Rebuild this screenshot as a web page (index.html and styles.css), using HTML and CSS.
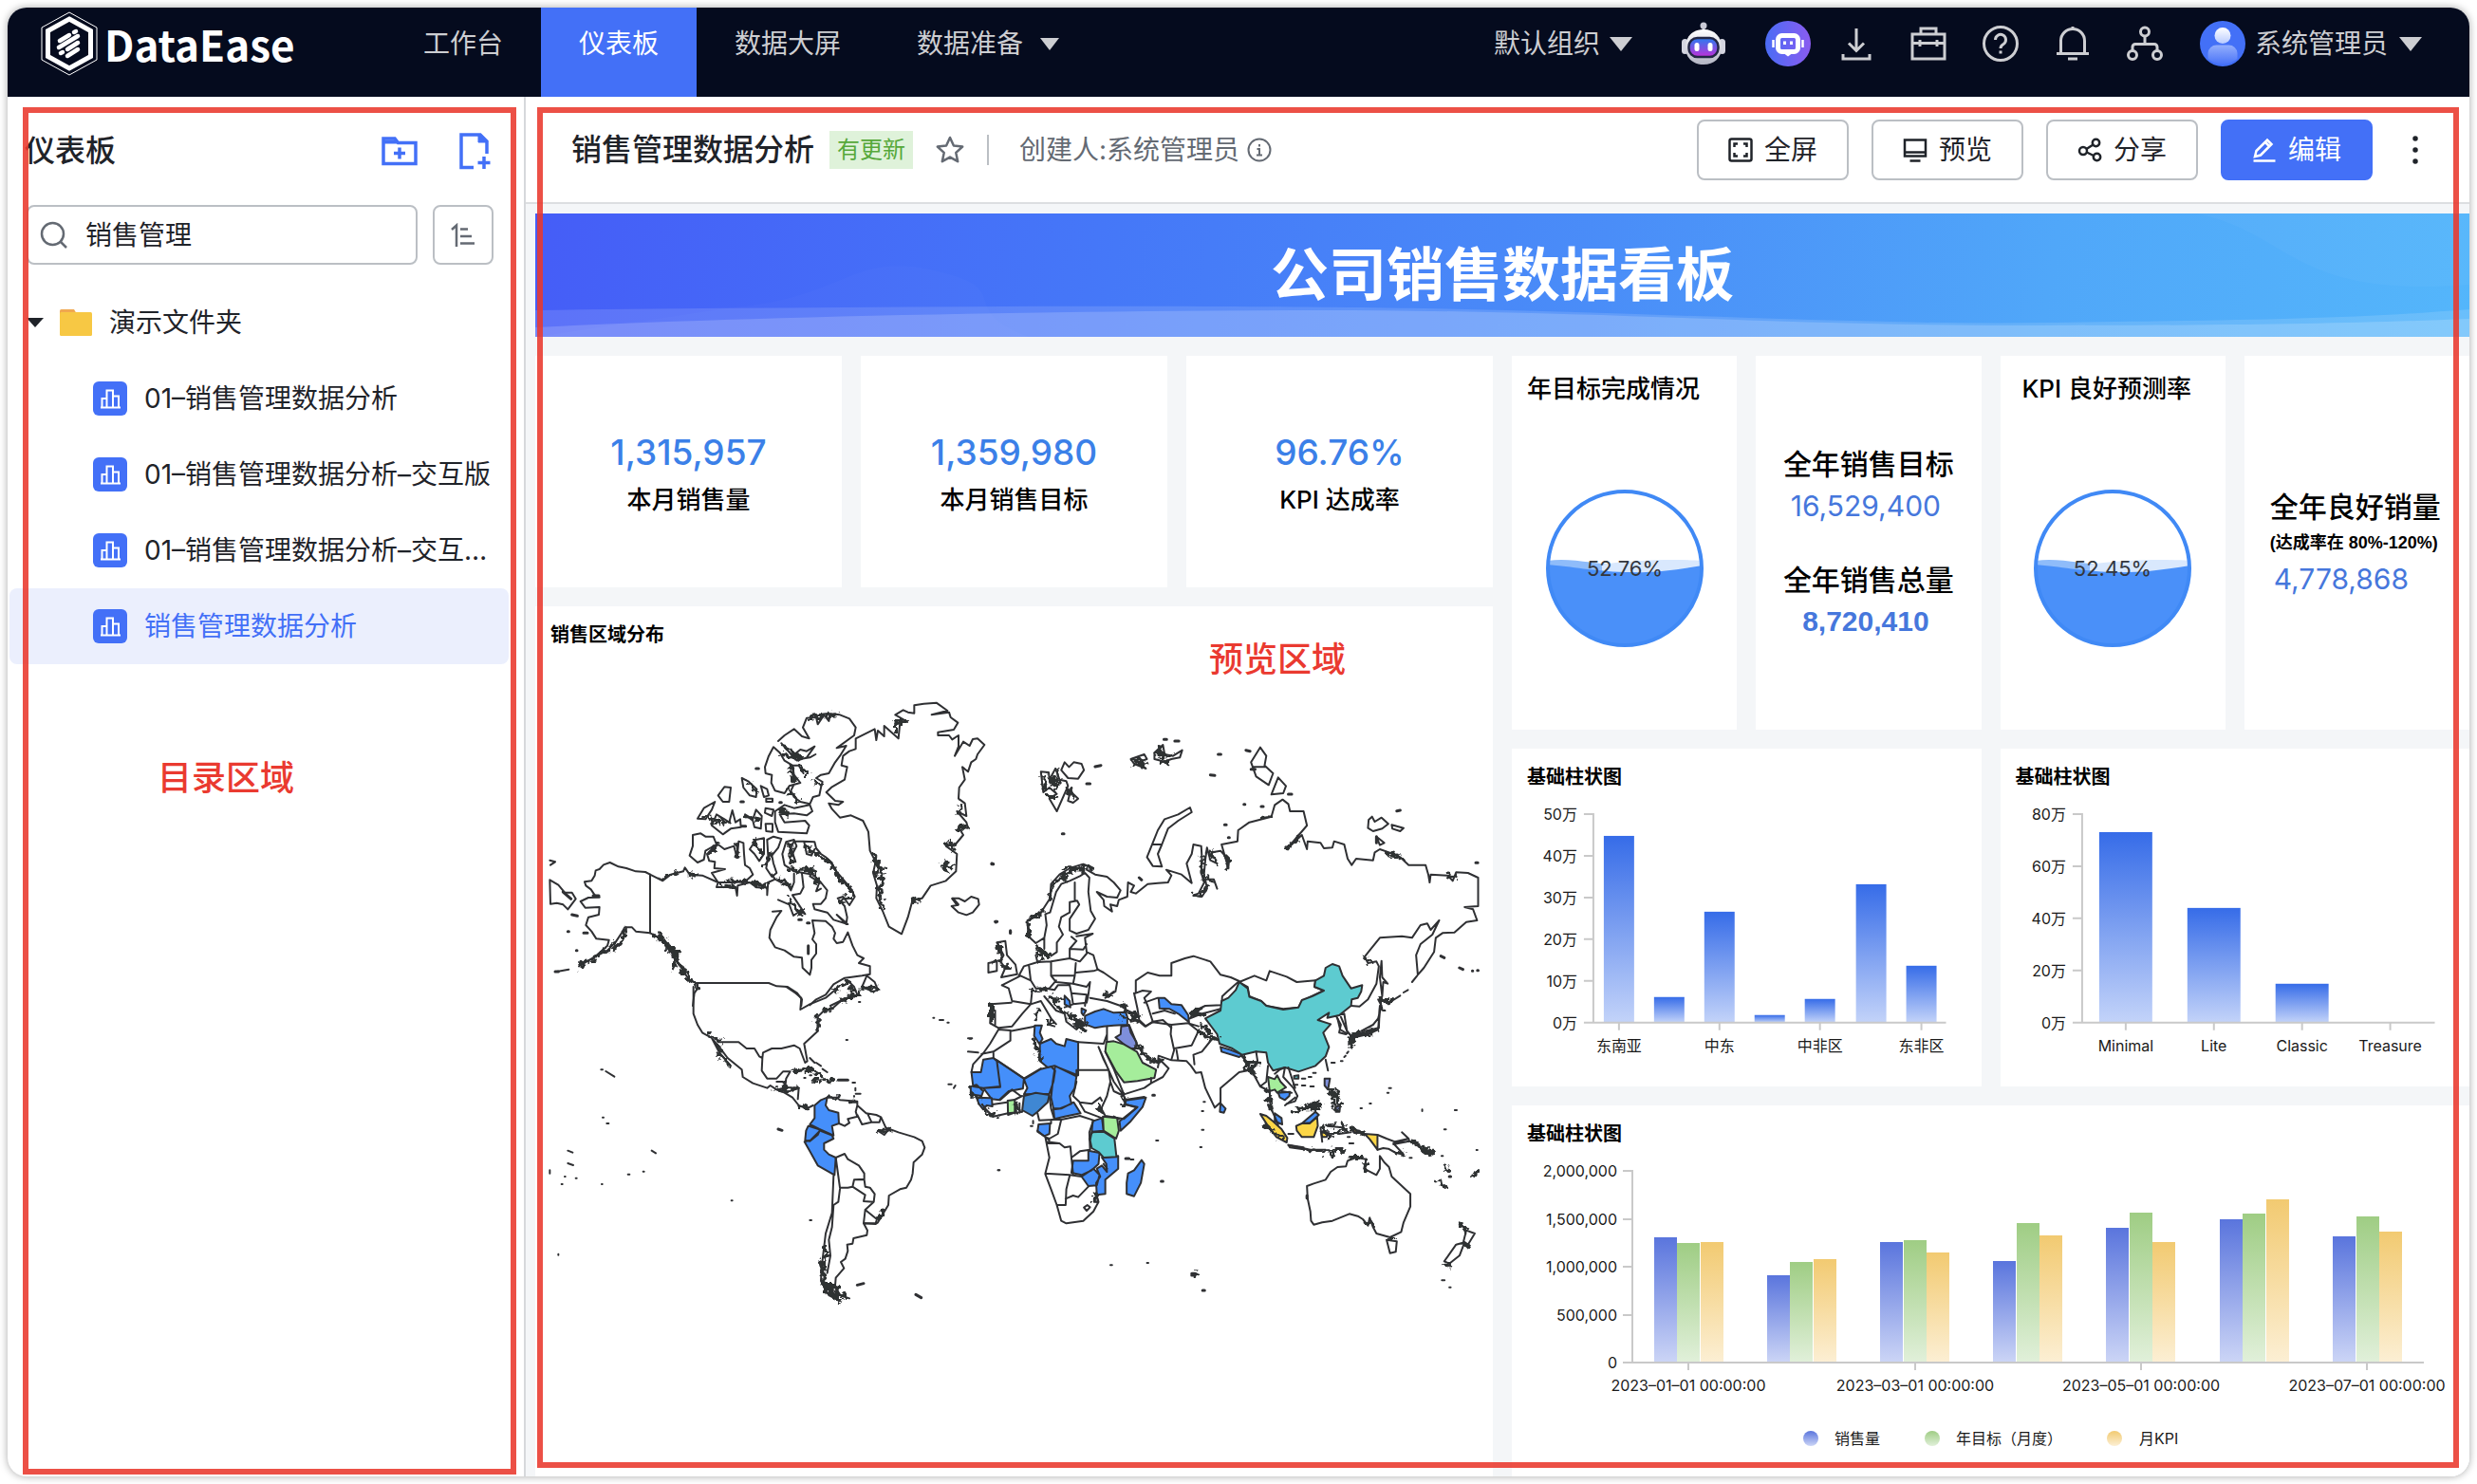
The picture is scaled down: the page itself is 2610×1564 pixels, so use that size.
FILE: index.html
```html
<!DOCTYPE html>
<html lang="zh-CN">
<head>
<meta charset="utf-8">
<title>DataEase 仪表板</title>
<link rel="stylesheet" href="styles.css">
</head>
<body>
<svg class="defs" width="0" height="0" aria-hidden="true">
  <defs>
    <linearGradient id="bar" x1="0" y1="0" x2="0" y2="1"><stop offset="0" stop-color="#366ce8"/><stop offset="1" stop-color="#c3d3f9"/></linearGradient>
    <linearGradient id="g-blue" x1="0" y1="0" x2="0" y2="1"><stop offset="0" stop-color="#5a75dd"/><stop offset="1" stop-color="#ccd5f6"/></linearGradient>
    <linearGradient id="g-green" x1="0" y1="0" x2="0" y2="1"><stop offset="0" stop-color="#9fcd84"/><stop offset="1" stop-color="#e1f0da"/></linearGradient>
    <linearGradient id="g-yellow" x1="0" y1="0" x2="0" y2="1"><stop offset="0" stop-color="#f2ca71"/><stop offset="1" stop-color="#fcefd4"/></linearGradient>
    <linearGradient id="ai" x1="0" y1="0" x2="1" y2="0"><stop offset="0" stop-color="#4a6cf5"/><stop offset="1" stop-color="#8a5cf0"/></linearGradient>
    <linearGradient id="visor" x1="0" y1="0" x2="0" y2="1"><stop offset="0" stop-color="#2a7cf0"/><stop offset="1" stop-color="#c02fd8"/></linearGradient>
    <linearGradient id="shell" x1="0" y1="0" x2="0" y2="1"><stop offset="0" stop-color="#ffffff"/><stop offset="1" stop-color="#b4b6c4"/></linearGradient>
    <linearGradient id="person" x1="0" y1="0" x2="0" y2="1"><stop offset="0" stop-color="#ffffff"/><stop offset="1" stop-color="#b9cbff"/></linearGradient>
    <linearGradient id="torso" x1="0" y1="0" x2="0" y2="1"><stop offset="0" stop-color="#93aefc"/><stop offset="1" stop-color="#4a74f8"/></linearGradient>
    <filter id="rugged" x="-5%" y="-5%" width="110%" height="110%"><feTurbulence type="fractalNoise" baseFrequency=".06" numOctaves="2" seed="4"/><feDisplacementMap in="SourceGraphic" scale="34" xChannelSelector="R" yChannelSelector="G"/></filter>
    <symbol id="dash" viewBox="0 0 36 36"><rect width="36" height="36" rx="6" fill="#4370f7"/><path d="M8 27.500h21M9.500 27V18h5M14.500 27V9.500h6.500V27M21 15.500h6V27" fill="none" stroke="#fff" stroke-width="2"/></symbol>
  </defs>
</svg>

<div class="app">
  <header class="topbar">
    <a class="logo" href="#">
      <svg width="62" height="68" viewBox="0 0 62 68" fill="none"><path d="M31 1 60 17v34L31 67 2 51V17z" stroke="#fff" stroke-width="1"/><path d="M31 8 53.500 20.500v27L31 60 8.500 47.500v-27z" stroke="#fff" stroke-width="5"/><g stroke="#fff" stroke-width="4.500" stroke-linecap="round"><path d="M21 31l10-6M36 22l2-1M20 38l20-12M22 44l2-1M29 40l11-7M29 47l11-7"/></g></svg>
      <span>DataEase</span>
    </a>
    <nav class="nav">
      <a href="#">工作台</a><a href="#" class="active">仪表板</a><a href="#">数据大屏</a><a href="#">数据准备<i class="caret"></i></a>
    </nav>
    <div class="tools">
      <button class="org" type="button">默认组织<i class="caret big"></i></button>
      <button class="robot" type="button" aria-label="助手"><svg width="46" height="46" viewBox="0 0 46 46"><circle cx="23" cy="4" r="3.500" fill="#c9cad6"/><path d="M21.500 5h3v6h-3z" fill="#c9cad6"/><rect x="0" y="18" width="7" height="16" rx="3.500" fill="#d4d5e0"/><rect x="39" y="18" width="7" height="16" rx="3.500" fill="#d4d5e0"/><path d="M23 8c12 0 19 8 19 19S34 45 23 45 4 38 4 27 11 8 23 8z" fill="url(#shell)"/><rect x="7.500" y="17" width="31" height="20" rx="9" fill="url(#visor)" stroke="#232746" stroke-width="2.500"/><rect x="13.500" y="22" width="5" height="9" rx="2.500" fill="#fff"/><rect x="27.500" y="22" width="5" height="9" rx="2.500" fill="#fff"/></svg></button>
      <button class="ai" type="button" aria-label="智能问数"><svg width="48" height="48" viewBox="0 0 48 48"><circle cx="24" cy="24" r="24" fill="url(#ai)"/><rect x="13.500" y="15.500" width="21" height="17" rx="4" fill="none" stroke="#fff" stroke-width="5"/><path d="M8.500 20v8M39.500 20v8" stroke="#fff" stroke-width="2.500"/><path d="M20.500 21.500v3.500M27.500 21.500v3.500" stroke="#fff" stroke-width="3"/><path d="M20 34.500h8L24 37.500z" fill="#fff"/></svg></button>
      <button class="t1" type="button" aria-label="下载"><svg width="40" height="40" viewBox="0 0 40 40"><path d="M20 4v23M12 19.500l8 8 8-8M6 31v5h28v-5"/></svg></button>
      <button class="t2" type="button" aria-label="工具箱"><svg width="40" height="40" viewBox="0 0 40 40"><path d="M3 10h34v26H3zM12 10V4h16v6M3 19.500h34M11 16v7M29 16v7"/></svg></button>
      <button class="t2" type="button" aria-label="帮助"><svg width="40" height="40" viewBox="0 0 40 40"><circle cx="20" cy="20" r="17.500"/><path d="M14.500 16a5.500 5.500 0 1 1 8.500 4.500c-2 1.200-3 2-3 4.500M20 27.500v3"/></svg></button>
      <button class="t2" type="button" aria-label="消息"><svg width="40" height="40" viewBox="0 0 40 40"><path d="M3 30.500h34M7.500 30V17a12.500 12.500 0 0 1 25 0v13M20 2v3M15 36h10"/></svg></button>
      <button class="t2" type="button" aria-label="组织"><svg width="40" height="40" viewBox="0 0 40 40"><circle cx="20" cy="7.500" r="4.500"/><circle cx="7" cy="32" r="4.500"/><circle cx="33" cy="32" r="4.500"/><path d="M20 12v8M7 27v-3.500a3 3 0 0 1 3-3h20a3 3 0 0 1 3 3V27"/></svg></button>
      <button class="user" type="button"><svg width="48" height="48" viewBox="0 0 48 48"><circle cx="24" cy="24" r="24" fill="#4370f7"/><circle cx="24" cy="15.500" r="8.500" fill="url(#person)"/><path d="M8.500 40V34a9 9 0 0 1 9-8.500h13a9 9 0 0 1 9 8.500v6a24 24 0 0 1-31 0z" fill="url(#torso)"/></svg>系统管理员<i class="caret big"></i></button>
    </div>
  </header>

  <div class="body">
    <aside class="side">
      <div class="side-head">
        <h2>仪表板</h2>
        <button type="button" aria-label="新建文件夹"><svg width="38" height="32" viewBox="0 0 38 32" fill="none" stroke="#4370f7" stroke-width="3.500"><path d="M2 29.500V3h12l3.500 4.500H36v22z"/><path d="M2 5h14l1 3H2z" fill="#4370f7" stroke-width="1"/><path d="M19 12.500v12M13 18.500h12"/></svg></button>
        <button type="button" aria-label="新建仪表板"><svg width="38" height="40" viewBox="0 0 38 40" fill="none" stroke="#4370f7" stroke-width="3.500"><path d="M17 37.500H4V3h20l7 7v13"/><path d="M22 3v8h9z" fill="#4370f7" stroke-width="1"/><path d="M28 26v13M21.500 32.500h13"/></svg></button>
      </div>
      <div class="search-row">
        <label class="search"><svg width="30" height="30" viewBox="0 0 30 30" fill="none" stroke="#646a73" stroke-width="2.500"><circle cx="13.500" cy="13.500" r="11.500"/><path d="M22 22l6 6"/></svg><input type="text" value="销售管理" aria-label="搜索"></label>
        <button type="button" class="sort" aria-label="排序"><svg width="26" height="26" viewBox="0 0 26 26" fill="none" stroke="#646a73" stroke-width="2.500"><path d="M1 7l5-4.500V25M10 6.500h8M10 14h12M10 21.500h15"/></svg></button>
      </div>
      <ul class="tree">
        <li><button type="button" class="folder"><i class="caret dark"></i><svg width="34" height="30" viewBox="0 0 34 30"><path d="M0 2.500Q0 1 1.500 1H15l3 5H0z" fill="#f0a850"/><rect y="4" width="34" height="25" rx="1.500" fill="#f7c844"/></svg><span>演示文件夹</span></button></li>
        <li><button type="button"><svg width="36" height="36"><use href="#dash"/></svg><span>01–销售管理数据分析</span></button></li>
        <li><button type="button"><svg width="36" height="36"><use href="#dash"/></svg><span>01–销售管理数据分析–交互版</span></button></li>
        <li><button type="button"><svg width="36" height="36"><use href="#dash"/></svg><span>01–销售管理数据分析–交互…</span></button></li>
        <li><button type="button" class="selected"><svg width="36" height="36"><use href="#dash"/></svg><span>销售管理数据分析</span></button></li>
      </ul>
      <p class="note">目录区域</p>
      <div class="frame"></div>
    </aside>

    <main class="main">
      <div class="bar">
        <h1>销售管理数据分析</h1>
        <span class="tag">有更新</span>
        <button type="button" class="plain star" aria-label="收藏"><svg width="30" height="30" viewBox="0 0 30 30" fill="none" stroke="#646a73" stroke-width="2.500" stroke-linejoin="round"><path d="M15 2l3.900 8.600 9.300 1-6.900 6.300 1.900 9.300L15 22.600l-8.200 4.600 1.900-9.300L1.800 11.600l9.300-1z"/></svg></button>
        <span class="divider"></span>
        <span class="creator">创建人:系统管理员</span>
        <svg class="info" width="26" height="26" viewBox="0 0 26 26" fill="none" stroke="#646a73" stroke-width="2"><circle cx="13" cy="13" r="11.500"/><path d="M13 7v2.500M10.500 12H13v6.500M10 18.500h6"/></svg>
        <div class="actions">
          <button type="button"><svg width="26" height="26" viewBox="0 0 26 26"><rect x="1.500" y="1.500" width="23" height="23" rx="2"/><path d="M6.500 10V6.500H10M16 6.500h3.500V10M6.500 16v3.500H10M16 19.500h3.500V16"/></svg>全屏</button>
          <button type="button"><svg width="26" height="26" viewBox="0 0 26 26"><path d="M2 2.500h22v17H2zM2 15.500h22M7.500 24.500h11"/></svg>预览</button>
          <button type="button"><svg width="26" height="26" viewBox="0 0 26 26"><circle cx="6" cy="14" r="4"/><circle cx="19.500" cy="5.500" r="3.700"/><circle cx="20.500" cy="20.500" r="3.700"/><path d="M9.500 12l7-4.500M9.800 15.500l7.200 3.500"/></svg>分享</button>
          <button type="button" class="primary"><svg width="26" height="26" viewBox="0 0 26 26"><path d="M3 20l1.500-6L16 2.500l4.500 4.500L9 18.500zM14 5l4 4M1.500 24.500h23"/></svg>编辑</button>
          <button type="button" class="more" aria-label="更多"><svg width="6" height="30" viewBox="0 0 6 30"><circle cx="3" cy="3" r="1.500"/><circle cx="3" cy="15" r="1.500"/><circle cx="3" cy="27" r="1.500"/></svg></button>
        </div>
      </div>

      <div class="canvas">
        <div class="banner">
          <svg viewBox="0 0 2038 130" preserveAspectRatio="none" aria-hidden="true"><path d="M200 100C330 90 330 40 420 60S440 100 520 130H0z" fill="#fff" opacity=".02"/><path d="M1750 0C1850 20 1850 90 2038 75V0z" fill="#fff" opacity=".03"/><path d="M0 102C300 98 700 96 936 100S1400 118 1600 115 1900 112 2038 101V130H0z" fill="#fff" opacity=".13"/><path d="M0 120C200 110 500 103 800 102S1300 118 1560 118 1900 116 2038 111V130H0z" fill="#fff" opacity=".17"/></svg>
          <h2>公司销售数据看板</h2>
        </div>
        <div class="col">
          <div class="kpis">
            <section class="card kpi"><strong>1,315,957</strong><span>本月销售量</span></section>
            <section class="card kpi"><strong>1,359,980</strong><span>本月销售目标</span></section>
            <section class="card kpi"><strong>96.76%</strong><span>KPI 达成率</span></section>
          </div>
          <section class="card map">
            <h3>销售区域分布</h3>
            <svg viewBox="564 683 1009 873" role="img" aria-label="销售区域分布">
              <!-- North America, Arctic, Greenland -->
              <g transform="translate(560 700) scale(.333333)">
                <path d="M248 627L275 640 300 645 330 655 360 657 375 665V850L330 845 318 832 295 832 285 850 265 880 240 905 200 925 150 955M248 627L228 634 215 648 203 652 200 668 190 685 168 688 172 700 188 712 200 730 215 737 180 738 155 750 170 770 215 768 213 792 180 800 172 825 190 845 205 868 245 872 240 890 195 930"/>
                <path d="M375 665L415 685 440 665 480 655 485 643 500 665 540 668 590 690 585 705 645 705 650 732 652 700 690 690 712 706 745 705V730L748 690 770 680 760 665M770 680L790 690 800 680 820 715 830 690 830 662M855 662L860 705 850 725 825 730 865 790 850 780 828 795 815 760 780 745M790 780L762 782M790 780L775 800 755 840 752 865 770 895 800 905 830 925 855 928 857 960 880 982 885 960 885 935 900 915 900 885 888 870 895 850 888 810 930 812 950 830 960 850 955 868 965 882 985 878 1000 848 1015 890 1030 920 1050 930 1035 945 1070 955 1070 980 1045 985 990 992 955 1012 930 1045 900 1060 880 1078M945 1080L985 1060 1030 1045 1020 1020 1000 1000M1060 985L1045 1020 1080 1035 1095 1030 1085 1005Z"/>
                <path d="M375 850L405 865 430 890 455 930 480 970 500 1000 525 1010V1025L515 1040 510 1080M525 1008H750L775 1018 810 1020 840 1040 855 1060 853 1080"/>
                <path class="thick" d="M390 858L410 870 435 900 455 930 480 970 500 1000M400 855L440 890 460 915 450 960M425 870L460 930M465 940L490 980 505 1002 522 1018M415 680L440 665 462 660M500 662L520 668M260 885L220 918 150 955M300 835L280 885 260 905M985 1065L1020 1045 1010 1025M960 1030L1000 1000M1050 1025H1090"/>
                <path d="M860 560L895 562 900 582 915 600 930 610 950 628 955 645 985 680 1010 710 1022 735 1005 762 985 735 968 740 990 765 998 800 995 822 965 792 1000 822 955 808 935 785 895 775 890 758 915 758 930 740 935 715 915 690 890 665 830 655 800 635 793 600 805 562 830 555 838 575 825 600 835 625 820 580 830 560ZM862 562L870 600 885 605 895 585M890 650L880 670 910 690 900 718 915 710"/>
                <path class="thick" d="M865 575L895 600M880 590L935 620 950 635 975 680 1000 700 1018 730M820 650H888L905 690M780 680L820 705M620 685L690 690 740 700M590 695L640 705M650 570V605M560 600L590 570M815 740L850 785M975 745L1005 740M820 570V630M735 640L755 600"/>
                <path d="M590 570L555 600 562 622 580 625 578 645 612 648 570 660 590 690 640 690 675 688 700 665 690 645 675 635 672 600 670 565 655 560 650 612 640 575 610 585ZM510 540L535 535 550 545 575 545 585 570 550 590 545 618 525 627 500 605 510 575ZM745 555L765 545 790 552 780 580 760 605 765 630 775 660 760 672 742 645 748 605ZM690 585L710 555 735 550 735 600 720 622 705 600Z"/>
                <path d="M770 465L800 445 830 455 880 445 888 465 870 478 830 472 785 475 800 500 865 495 878 510 870 535 780 530 770 500ZM740 455L765 460 760 480 738 470ZM740 505L762 505 762 530 742 528ZM675 475L700 490 710 460 728 480 725 520 705 515 700 495ZM585 475L610 490 625 500 635 462 645 500 660 490 662 515 630 520 605 538 570 510ZM525 488L545 455 580 435 570 460 550 490ZM590 415L610 388 630 390 625 435 605 435ZM665 360L685 370 712 395 710 420 690 415 670 390ZM725 385L745 395 750 415 735 420ZM742 425H762V435H742Z"/>
                <path d="M765 262L785 280 800 305 825 320 830 350 850 375 815 385 800 408 770 400 758 375 760 350 740 345 738 325 750 290ZM780 243L800 225 830 205 855 228 878 235 858 200 870 170 900 168 905 190 925 160 940 180 945 157 975 160 1005 172 1025 200 1020 225 965 265 995 258 975 290 960 310 940 345 915 350 900 360 920 372 915 390 910 415 890 420 880 442 850 435 830 420 820 400 830 380M820 320H845L860 345M840 305L870 295 895 260 870 275 850 270 825 290 790 250ZM835 302L880 295 898 285"/>
                <path class="thick" d="M800 260L850 295M795 285L845 300M820 320L830 370M845 320L870 348M890 370L915 380M815 400L845 435M785 465L810 470M680 480L720 490M550 480L590 505M595 490L620 500M700 560L730 600M880 168L960 160M690 375L710 410"/>
                <path d="M1025 235L1085 205 1090 240 1095 210 1115 228 1115 195 1160 235 1165 185 1185 180 1150 160 1175 145 1190 152 1210 155 1210 130 1240 125 1280 122 1315 147 1265 160 1320 152 1325 168 1348 185 1335 207 1285 215 1285 225 1320 225 1330 238 1350 225 1350 260 1338 290 1365 245 1385 258 1395 237 1410 235 1432 255 1410 285 1405 300 1390 310 1380 340 1362 325 1370 365 1352 390 1350 425 1370 440 1375 480 1345 465 1375 500 1380 518 1350 515 1365 540 1340 570 1310 575 1345 600 1342 655 1310 685 1262 700 1235 740 1205 745 1190 800 1170 853 1130 830 1110 780 1090 740 1092 700 1080 660 1088 625 1070 590 1065 530 1048 495 1010 478 975 485 950 458 940 440 970 445 985 435 960 432 932 405 950 388 990 365 998 325 980 320 985 290 1005 275 1025 268Z"/>
                <path class="thick" d="M1080 600L1088 630 1110 650 1105 700 1100 740 1112 775M1095 630L1090 670M1310 570L1340 575M1325 560L1335 590M1295 640L1340 640M1310 625L1305 655M1350 520L1380 515M1360 440L1350 470M1205 745L1225 742M1150 180H1185M1152 215V190"/>
                <path d="M1330 740L1345 762 1328 765 1350 785 1375 793 1395 785 1415 760 1412 742 1390 735 1370 750 1350 740ZM58 682L85 698 105 722 128 722 140 742 115 775 100 760 80 755 60 758ZM58 620L75 625 60 635M80 972L118 965"/>
                <path class="speck" d="M1332 742L1348 760M100 720L125 742M128 792L145 796M115 845h3M142 905h2M75 972h10M1455 630l5 2M1468 814v2M1514 845v5M662 435h8M785 437h5M710 330h8M665 512h12M875 890v25M845 808h8M872 818h6M270 890L282 885M195 732h18M165 850h12"/>
              </g>
              <!-- South and Central America, Pacific -->
              <g transform="translate(560 1040) scale(.333333)">
                <path d="M512 0V85L525 120 540 145 570 162 605 205 620 225 665 262 668 285 700 305 745 320 755 312 775 325M570 162L595 210 630 250M590 175H655L680 195 705 195 720 220 730 225M730 225L732 208 760 195 790 195 830 185 848 195 865 240 872 235 862 180 905 140 905 95 925 75 950 70 985 38M730 225L728 265 745 290 775 290 795 268 818 268 805 290 802 318M795 300H775M802 318L845 320 842 355M775 325L800 335 825 350 845 375 870 385 890 375M850 72L853 35 835 20 805 0M850 72L880 55 930 35 965 5M780 325L805 318M800 335L842 322"/>
                <path class="thick" d="M905 90V135M590 185L600 200M590 210L625 245M835 265L880 260 915 280M915 295H960M890 296H900M800 300V325L840 322M775 325L805 330M850 378L870 382M925 75L950 70M560 155L600 170M990 42L1035 20M1050 5H1090M935 352H965M1010 362H1028"/>
                <path class="speck" d="M970 295H1000"/>
                <path class="thin" d="M880 225L895 240M900 240L915 250M920 260L935 270M880 280h5M862 288h4M1015 303h8M1024 320v8M1025 338h15M1020 345v2"/>
                <path class="f-blue" d="M935 350L930 375 940 390 970 398 972 432 950 440 955 470 910 450 880 435 895 415 895 375 915 358ZM875 440L912 452 905 468 880 488 865 485 868 455ZM912 455L950 470 955 480 925 495 925 515 940 530 962 540 958 595 905 565 880 520 863 490 882 485Z"/>
                <path d="M935 350L965 350 975 358 1030 362 1030 375 1058 400 1090 405 1105 412 1120 445 1160 460 1210 475 1235 488 1243 508 1235 530 1208 555 1205 590 1200 610 1185 635 1165 640 1130 660 1128 690 1095 745 1088 750 1050 748 1062 770 1060 785 1018 795 1015 812 998 815 1000 835 992 860 978 870 988 890 962 920 960 945 975 975 1005 985M1030 375L1025 395 1030 410 1000 418 1005 430 990 440 972 432M1030 405L1045 435 1075 428 1062 400M1075 428H1100L1105 412M1095 455L1130 450 1115 468Z"/>
                <path d="M962 540L990 528 1000 545 1035 565 1052 590 1052 608 1020 610 1015 632 1000 635 975 635ZM1020 610H1052L1055 632 1070 635 1085 655 1082 680 1050 678 1055 658 1015 632M1082 680L1055 705 1092 735 1088 748 1050 748 1055 705M975 640L970 680 955 690 950 760 940 800 945 850 935 905M955 597L950 715 930 780 918 880 915 930 940 975 975 993"/>
                <path class="thick" d="M930 820V850L918 880 925 935 945 975M918 900L930 960 975 992M925 870V930L950 965M935 945H965L970 980M950 950L990 980M940 960L970 990M930 855H940M1095 735L1115 708M1100 455H1130"/>
                <path class="speck" d="M1030 943L1050 938M1215 973L1232 983M780 450L792 454"/>
                <path class="thin" d="M220 262h5M235 267L262 284M225 413h3M238 432h6M115 518L130 524M115 558L132 564M105 600h2M140 605h3M95 624h3M58 580v10M222 624h2M305 593h5M353 584h3M380 518L393 526M632 676h3M880 738h5M85 845v3M1035 48h4M995 168h4M1270 98h3M1290 105h12M1315 113h4M1385 164h5M1476 580h4M1318 308h10M1335 320L1340 312"/>
              </g>
              <!-- Northern Europe and Asia -->
              <g transform="translate(1020 740) scale(.357143 .333333)">
                <path d="M215 220L238 222 240 245 258 210 270 245 290 250 295 265 262 345 240 305 262 290 240 270 222 285ZM285 190L298 205 312 190 335 195 342 215 325 242 295 240 275 215ZM290 270L325 305 310 318 295 312 300 290M480 180L520 165 528 180 500 190 525 210 490 195ZM550 160L575 135 580 165 605 170 632 152 625 175 600 180 580 188 550 180Z"/>
                <path class="thick" d="M225 235V275M245 240L262 275M262 215V260M240 300H262M300 280L312 305M485 180L520 185M495 195L525 205M555 165L600 170M570 190H590M565 145L575 175"/>
                <path d="M655 333L660 348 620 375 590 400 572 450 560 480 572 520 545 518 528 490 545 445 560 405 580 370 620 355ZM545 450H572M862 143L880 170 875 200 900 225 887 262 850 235 835 190ZM840 205H878M915 238L938 265 930 288 895 292ZM1182 372L1192 362 1200 378 1220 365 1240 385 1222 400 1195 408 1180 398ZM1250 388L1285 398 1275 408 1252 400ZM1205 425L1228 445 1215 452Z"/>
                <path d="M350 530L375 545 410 552 430 570 450 595 440 618 410 615 380 600 400 625 402 645 425 662 420 640 440 645 445 625 470 615 472 570 490 580 480 600 495 605 530 575 560 572 590 570 600 548 585 530 630 545 660 572 645 510 660 480 665 450 688 455 690 490 688 540 697 570 680 605 665 610 690 615 705 590 700 560 725 560 735 590M695 560L700 500 705 460 715 500 735 510M720 475L745 470 770 500 768 525 748 450 795 440 797 405 830 380 895 362 905 325 928 308 945 322 950 345 990 345 1000 390 940 465 985 420 1000 465 1002 440 1040 445 1050 462 1075 460 1080 440 1110 450 1120 495 1132 515 1145 495 1195 500 1200 475 1215 465 1250 478 1275 490 1300 515 1350 515 1358 545 1362 570 1365 545 1415 548 1430 565 1440 538 1475 540 1505 555V645L1465 648 1490 655 1502 690 1470 695 1435 728 1400 730 1380 745 1375 790 1345 840 1327 862 1322 800 1335 765 1370 735 1390 690 1365 720 1355 700 1335 705 1310 745 1280 740 1215 745 1185 785 1170 805 1180 825 1205 820 1212 835 1205 890 1180 940 1155 962 1130 960M1220 818L1222 870 1238 890 1225 885 1222 930 1215 870Z"/>
                <path class="thick" d="M710 470L735 510M765 490V525M690 490L695 560M665 608L690 612 705 580M700 558L725 565M1235 475L1280 490M975 430L940 462M1170 805L1190 822M1415 545L1435 555M895 360L865 365"/>
                <path class="speck" d="M578 118h8M610 123h12M738 165h8M820 152L832 155M715 230L728 232M375 204L392 200M350 258h10M278 416h5M70 512h4M814 323h3M865 330h6M757 388h5M768 428h3M1265 344L1275 342M1498 508h6M1395 803L1405 808M1450 840L1460 845M1488 850h1M1503 848h2M945 291h10M835 212h12M505 555L512 562M80 694h6M125 722v8M1205 425V445"/>
                <path d="M370 525L340 512 300 525 270 545 245 575 242 620 215 665 175 690 178 740 200 762 225 745 232 705 228 670 242 665 260 600 275 575 300 565 330 550 345 540 358 555 355 600 362 660 375 685 355 720 320 732 300 722 300 685 328 640 322 628 300 632 300 665 275 680 268 710 280 735 262 760 262 790 245 802M315 570V628M225 745L225 780"/>
                <path class="thick" d="M250 575L300 535 350 518 370 530M265 560H285M290 525L340 530M245 585L240 620M215 665L178 695 180 740M200 775L225 790 215 812M205 795H235M230 800L240 810"/>
                <path d="M320 740L368 732 345 745 350 790 370 800 382 845 400 855 440 885 435 915 405 935M305 742L320 755 300 780 340 782 350 765M300 780L300 810 330 820 350 795M300 810L245 820 245 865 315 865 318 825M318 855L370 850 385 845M315 865L310 890 350 900 360 885M245 865L260 885 310 890M205 822L245 820M180 835L185 880 200 905 240 905 260 880M150 865L165 835 205 822 200 800M100 895L155 865 185 880M100 895L120 905 130 945 185 955 190 905M68 955L128 950M68 955L65 1015 90 1030M80 975V1020M90 1030L130 1025 160 985 185 955 215 945 245 1000 260 1018M245 1000L240 1020 255 1025M225 930L260 975 285 985M230 905L255 910 265 895 300 895 305 920 350 925M285 985L290 1010 320 1035M310 955L350 950 355 925 360 885M305 920L310 955 285 965M360 935L410 945 450 960 470 975M405 935L430 915M345 960L350 925M60 825L85 820V850L60 855ZM85 760L110 755 115 800 140 830 145 860 98 870 110 840 95 820 105 800Z"/>
                <path class="thick" d="M92 765L98 800M88 780L100 810M100 835H115M240 925L280 980M255 940H280M290 985L320 1020 340 1035M300 1000L330 1010M205 975V1000M235 1010L255 1015M405 925L420 930M455 960L490 990M190 912L230 910M70 955V1010M75 820L95 815"/>
                <path class="f-blue" d="M285 928L300 945 302 965 285 955ZM335 968L348 975 340 990 335 982Z"/>
                <path d="M495 880L530 855 565 865 600 865 600 825 640 810 665 803 715 820 745 862 775 870 800 882 765 915 750 930 748 958 700 960 670 975 655 1000M495 880L495 920 515 912 540 915 520 935 530 960 545 1010 525 1025 505 1005 500 970 490 920M560 935L520 950M655 1000L690 985 745 970M545 985L580 975 610 985M665 985L700 990M470 975L500 990M545 1010L575 1005 600 1030M800 885L845 865 880 880 890 850 940 868 970 885 1025 880 1022 900 1050 912 985 945 975 965 930 970 880 960 865 945 830 930 825 900Z"/>
                <path class="thick" d="M660 980L700 990M480 985L510 995M1225 945L1250 945M1218 935L1222 965"/>
                <path class="thin" d="M1250 945L1275 928M1285 918L1298 910M1310 885L1325 865"/>
                <path d="M1215 965L1210 1035 1180 1050 1140 1060 1130 1070M1210 940L1220 960 1210 1000 1195 1020 1160 1040M1090 990L1110 985 1118 1040 1130 1055M1085 990L1100 1020 1095 1045 1115 1050"/>
                <path class="thick" d="M1135 1055L1175 1045M1130 1060V1078"/>
              </g>
              <!-- Africa, Middle East, South Asia, Oceania -->
              <g transform="translate(1020 1040) scale(.357143 .333333)">
                <path class="f-blue" d="M562 35L580 35 600 55 630 58 650 90 652 112 620 85 595 70 565 68ZM345 92L375 78 400 70 430 82 465 80 470 95 470 120 430 122 400 125 375 130 345 118ZM197 122L218 122 212 145 220 165 210 180 195 155ZM212 180L245 165 260 180 285 188 290 165 325 175V280L255 250 235 255 212 235ZM10 270L38 270 45 230 75 225 85 235 95 315 45 320 15 315ZM85 232L165 290 162 322 120 330 92 358 70 355 45 320 95 317ZM165 292L215 260 245 252 257 265 252 300 240 338 165 340 175 320ZM257 250L320 283 315 320 300 345 305 370 270 385 252 385 245 350 250 300ZM8 315L25 310 45 330 40 345 8 340ZM25 350L70 352 72 378 55 375 45 388 32 370ZM252 388L275 385 312 365 332 400 285 410 255 418ZM460 360L525 350 515 380 480 425 450 455 447 425 498 382 465 372ZM368 425L395 415 400 455 365 458ZM208 435L242 432 240 465 225 472 205 458ZM310 550L355 550 355 518 388 525 385 560 365 580 335 595 305 588ZM395 540L443 535 443 575 405 610 405 655 380 658 378 620 390 600 380 575 395 565 410 585 408 560ZM335 600L370 575 388 595 380 628 355 630ZM512 548L520 560 510 620 490 662 468 655 468 620 472 590 490 580ZM745 190L775 200 810 215 800 222 748 205ZM915 335L950 332 948 345 935 358 920 350ZM905 400L925 415 927 435 905 425ZM985 432L1025 395 1035 405 1010 430ZM745 368L760 385 755 398 743 395Z"/>
                <path class="f-deep" d="M165 345L200 335 240 342 235 365 205 395 190 408 160 390Z"/>
                <path class="f-violet" d="M452 125L475 122 480 145 497 175 495 195 475 195 435 160 450 150ZM1052 290H1068L1062 325 1052 312ZM1085 380L1098 375 1096 395 1085 395Z"/>
                <path class="f-green" d="M405 205L408 175 430 172 460 182 498 205 515 240 555 262 550 288 500 298 460 302 435 265ZM117 360L138 357V398L118 405ZM398 410L440 415 445 455 437 480 400 455ZM885 285L905 292 912 280 922 300 938 318 912 335 905 325 890 330ZM885 372L898 385 890 388Z"/>
                <path class="f-teal" d="M365 460L400 458 432 480 438 538 400 540 385 522 365 510 360 485ZM800 -15L825 5 830 32 865 45 880 60 930 72 975 65 985 42 1015 30 1050 12 1022 0 1025 -20 1050 -35 1055 -60 1075 -72 1095 -65 1105 -35 1130 5 1163 -5 1160 15 1150 35 1132 40 1130 60 1095 90 1060 98 1065 82 1032 105 1070 118 1048 145 1065 190 1055 220 1025 250 975 268 935 255 900 265 885 240 880 208 850 205 808 215 780 195 742 180 735 150 700 100 745 75 748 45 768 35 790 10ZM962 282L975 280 975 290 962 290Z"/>
                <path class="f-yellow" d="M862 402L880 408 900 425 925 450 942 478 940 492 910 475 885 440ZM968 440L985 432 1008 432 1030 412 1032 440 1020 475 985 475 970 455ZM1170 465L1208 468V515L1185 482ZM945 500L990 508V514L950 508ZM1042 460L1060 462 1058 475H1045ZM1130 450L1155 455 1160 462 1140 462Z"/>
                <path d="M125 140L197 125M90 135L125 138 125 170 75 205 40 212M75 210V225M90 135L65 180 45 210 15 245 10 270M75 225L165 290 215 258M325 175L400 180 410 150M410 125V175M385 190L400 230 415 262 420 300 430 330M320 263H412M320 263V283M320 300L310 345 330 365 365 370 390 350 395 360M330 368L345 395 395 415M420 300L410 345 393 385 405 408 460 418 500 380 465 372 460 345 430 330M385 190L430 300 460 345 465 357 520 348M405 205L430 260 460 340 520 320 540 305 575 285 592 258 575 240 565 228 560 255M540 305V288M500 185L515 210 540 235 560 240 562 218 600 232 645 235 658 250M475 120L500 185M600 230L608 200 598 150 600 120 545 112 522 125 500 105 480 110M600 120L650 115 680 140 660 185 608 195M650 115L680 125M680 140L720 165 690 205 665 215 668 245M620 232L615 200M658 250L672 272 688 270 700 320 728 382 745 365 745 320 800 270 825 265 830 245 808 220M850 205L855 240 835 262 862 315 880 300 885 250M862 315L890 330 892 380 915 435M935 255L920 262 905 275M935 255L930 285 960 320 972 345 965 362 940 370M945 255L965 320M925 330L955 335"/>
                <path d="M138 357L160 345M95 358L130 325 155 345M72 372L115 365M75 410L118 400 160 395M75 410L50 385M142 368V398M152 368V398M240 345L245 385 255 420 210 422 205 400M245 432L245 420 275 420 265 465 240 480M275 420L330 408 370 422 358 460 360 515 330 520 305 540 302 505 285 508 270 495 232 490M240 480L228 475 240 540 228 590 300 595 335 600M232 495H268M305 540L310 592M228 592L245 640 262 690 288 690 290 640 300 597M288 670L310 660 325 665 355 632M262 690L275 740 290 748 340 740 370 710 385 680 380 660M342 698L352 690 360 697 350 708ZM372 668H382V680H372ZM205 455L240 485M400 560L410 575M430 410L445 418"/>
                <path class="thick" d="M10 340L35 352M10 320L12 345M40 375L60 405 80 408M145 370V395M855 240L830 262M810 220L825 262M815 240H840M835 265L845 280M455 345L465 372M500 190L540 232 570 240M680 140L705 160 735 165M690 120L715 145M660 85L690 70M885 330L895 385M360 462V475M375 655V680M450 90L500 110M305 90L340 125M325 100L345 115M195 170L215 235M385 375L395 400"/>
                <path class="thick" d="M1085 330L1098 375M1065 330L1085 345M1075 340L1085 380M1075 370L1095 390M960 395L1010 370 1035 360M985 385H1030M1000 375H1040M875 435L925 480M1000 515L1040 520M1050 525L1075 515 1110 512M1075 530L1095 518M1060 440L1085 435M1045 440L1060 475 1072 465M1060 460L1100 458M1105 430L1112 450M1130 450L1170 468M1132 165V185M1130 155L1165 145 1205 140M1140 150H1180M1220 50L1250 45"/>
                <path class="thin" d="M1055 230L1062 265M1072 240h10M1100 235h5M945 465H960M945 500L1010 515H1055M1095 465L1130 460M1120 475h6M1125 495h12M1085 510H1105M960 310h12M985 290h10M1005 285h8M985 312h10M1018 272h8M1010 315h10M935 375L965 350M1110 222l4-4M1118 210l4-5"/>
                <path d="M1215 60L1212 130 1170 140 1140 160M1100 95L1118 140 1130 155M1090 100L1098 135 1118 148M1208 468L1235 480 1260 490 1300 480 1280 460M1208 515L1225 510 1240 512 1262 525 1285 530 1255 495 1300 480 1302 488 1255 498M1040 445L1045 490M1060 440L1105 445"/>
                <path d="M1000 630L1020 622 1055 610 1070 585 1090 570 1115 568 1120 550 1145 540 1175 545 1168 575 1205 595 1215 575 1215 535 1228 555 1242 570 1250 600 1275 625 1305 655 1305 695 1285 745 1278 775 1245 792 1205 780 1195 760 1185 730 1180 755 1165 735 1150 725 1125 718 1075 740 1045 745 1020 752 1012 740 1010 710 1002 670ZM1235 800L1265 805 1262 838 1245 842ZM1450 745L1470 770 1495 780 1475 815 1462 805 1470 770ZM1465 808L1450 850 1420 875 1405 868 1440 815Z"/>
                <path class="thick" d="M1130 540H1165M1175 560V580M1175 745L1190 750M1240 795h20M1408 875L1420 880M1450 748L1470 772M1455 812L1475 818M1310 488L1335 505 1370 530M1350 520h15M1268 525L1285 530M1408 562L1414 582M1386 615L1410 632M1485 600L1503 585M1490 595h10M658 910h15"/>
                <path class="speck" d="M660 907h10M660 912h10M1000 660v8M1420 600h4M692 960h6M570 615h5M465 543h10M545 343h5"/>
                <path class="thin" d="M420 880h5M528 873h4M685 507h4M690 452h5M690 393h4M695 364h4M555 486h6M1242 320h6M1237 335h4M1185 369h4M1158 384h4M1340 388v5M1436 390h6M1405 451h5M1500 516h3M1397 535h4M1303 541h6M1398 928h8M1420 950h4M88 580h4M0 163h12M0 205L30 208M185 440h5M192 432v-8M480 546h8"/>
              </g>
            </svg>
          </section>
        </div>

        <div class="col">
          <div class="gauges">
            <section class="card gauge">
              <h3>年目标完成情况</h3>
              <svg viewBox="0 0 168 168" role="img" aria-label="52.76%"><circle cx="84" cy="84" r="82" fill="#fff"/><path d="M3 76C30 72 60 82 84 80S140 74 165 77A81 81 0 0 1 3 88z" fill="#8fbcfa"/><path d="M60 80C90 75 140 74 165 76V90H60z" fill="#d9e8fd"/><path d="M2 80C30 82 50 87 84 88S140 85 166 81A82 82 0 0 1 2 84z" fill="#4a90f9"/><circle cx="84" cy="84" r="81" fill="none" stroke="#4089f5" stroke-width="4"/><text x="84" y="92">52.76%</text></svg>
            </section>
            <section class="card totals">
              <b>全年销售目标</b><span class="num">16,529,400</span>
              <b class="second">全年销售总量</b><span class="num heavy">8,720,410</span>
            </section>
            <section class="card gauge">
              <h3>&nbsp;KPI 良好预测率</h3>
              <svg viewBox="0 0 168 168" role="img" aria-label="52.45%"><circle cx="84" cy="84" r="82" fill="#fff"/><path d="M3 76C30 72 60 82 84 80S140 74 165 77A81 81 0 0 1 3 88z" fill="#8fbcfa"/><path d="M60 80C90 75 140 74 165 76V90H60z" fill="#d9e8fd"/><path d="M2 80C30 82 50 87 84 88S140 85 166 81A82 82 0 0 1 2 84z" fill="#4a90f9"/><circle cx="84" cy="84" r="81" fill="none" stroke="#4089f5" stroke-width="4"/><text x="84" y="92">52.45%</text></svg>
            </section>
            <section class="card good">
              <b>全年良好销量</b><small>(达成率在 80%-120%)</small><span class="num">4,778,868</span>
            </section>
          </div>

          <div class="charts">
            <section class="card chart">
              <h3>基础柱状图</h3>
              <svg viewBox="0 0 495 312">
                <g fill="url(#bar)"><rect x="97" y="48" width="32" height="197"/><rect x="150" y="218" width="32" height="27"/><rect x="203" y="128" width="32" height="117"/><rect x="256" y="237" width="32" height="8"/><rect x="309" y="220" width="32" height="25"/><rect x="363" y="99" width="32" height="146"/><rect x="416" y="185" width="32" height="60"/></g>
                <path class="axis" d="M76 25h10V245M76 69h10M76 113h10M76 157h10M76 201h10M76 245H458M113 245v8M219 245v8M325 245v8M432 245v8"/>
                <g class="end"><text x="69" y="31">50万</text><text x="69" y="75">40万</text><text x="69" y="119">30万</text><text x="69" y="163">20万</text><text x="69" y="207">10万</text><text x="69" y="251">0万</text></g>
                <g class="mid"><text x="113" y="275">东南亚</text><text x="219" y="275">中东</text><text x="325" y="275">中非区</text><text x="432" y="275">东非区</text></g>
              </svg>
            </section>
            <section class="card chart">
              <h3>基础柱状图</h3>
              <svg viewBox="0 0 495 312">
                <g fill="url(#bar)"><rect x="104" y="44" width="56" height="201"/><rect x="197" y="124" width="56" height="121"/><rect x="290" y="204" width="56" height="41"/></g>
                <path class="axis" d="M76 25h10V245M76 80h10M76 135h10M76 190h10M76 245H458M132 245v8M225 245v8M318 245v8M411 245v8"/>
                <g class="end"><text x="69" y="31">80万</text><text x="69" y="86">60万</text><text x="69" y="141">40万</text><text x="69" y="196">20万</text><text x="69" y="251">0万</text></g>
                <g class="mid"><text x="132" y="275">Minimal</text><text x="225" y="275">Lite</text><text x="318" y="275">Classic</text><text x="411" y="275">Treasure</text></g>
              </svg>
            </section>
          </div>

          <section class="card chart wide">
            <h3>基础柱状图</h3>
            <svg viewBox="0 0 1009 346">
              <g fill="url(#g-blue)"><rect x="150" y="95" width="24" height="132"/><rect x="269" y="135" width="24" height="92"/><rect x="388" y="100" width="24" height="127"/><rect x="507" y="120" width="24" height="107"/><rect x="626" y="85" width="24" height="142"/><rect x="746" y="76" width="24" height="151"/><rect x="865" y="94" width="24" height="133"/></g>
              <g fill="url(#g-green)"><rect x="174" y="101" width="24" height="126"/><rect x="293" y="121" width="24" height="106"/><rect x="413" y="98" width="24" height="129"/><rect x="532" y="80" width="24" height="147"/><rect x="651" y="69" width="24" height="158"/><rect x="770" y="70" width="24" height="157"/><rect x="890" y="73" width="24" height="154"/></g>
              <g fill="url(#g-yellow)"><rect x="199" y="100" width="24" height="127"/><rect x="318" y="118" width="24" height="109"/><rect x="437" y="111" width="24" height="116"/><rect x="556" y="93" width="24" height="134"/><rect x="675" y="100" width="24" height="127"/><rect x="795" y="55" width="24" height="172"/><rect x="914" y="89" width="24" height="138"/></g>
              <path class="axis" d="M117 25h10V227M117 76h10M117 126h10M117 177h10M117 227H961M186 227v8M425 227v8M663 227v8M901 227v8"/>
              <g class="end"><text x="111" y="31">2,000,000</text><text x="111" y="82">1,500,000</text><text x="111" y="132">1,000,000</text><text x="111" y="183">500,000</text><text x="111" y="233">0</text></g>
              <g class="mid"><text x="186" y="257">2023–01–01 00:00:00</text><text x="425" y="257">2023–03–01 00:00:00</text><text x="663" y="257">2023–05–01 00:00:00</text><text x="901" y="257">2023–07–01 00:00:00</text></g>
              <circle cx="315" cy="307" r="8" fill="url(#g-blue)"/><circle cx="443" cy="307" r="8" fill="url(#g-green)"/><circle cx="635" cy="307" r="8" fill="url(#g-yellow)"/>
              <g><text x="340" y="313">销售量</text><text x="468" y="313">年目标（月度）</text><text x="661" y="313">月KPI</text></g>
            </svg>
          </section>
        </div>
      </div>
      <p class="note">预览区域</p>
      <div class="frame"></div>
    </main>
  </div>
</div>
</body>
</html>
```

FILE: styles.css
```css
* { box-sizing: border-box; }

body {
  margin: 0;
  padding: 8px;
  background: #fff;
  color: #1f2329;
  font-family: Inter, "Noto Sans CJK SC", sans-serif;
  font-size: 28px;
  line-height: 40px;
}

h1, h2, h3, p, ul { margin: 0; padding: 0; }
button { font: inherit; color: inherit; background: none; border: 0; padding: 0; }
a { color: inherit; text-decoration: none; }
svg { display: block; flex: none; }
.defs { position: absolute; }

.app {
  display: flex;
  flex-direction: column;
  min-height: calc(100vh - 16px);
  border-radius: 20px;
  overflow: hidden;
  box-shadow: 0 0 8px rgba(0, 0, 0, .35);
}

/* top bar */
.topbar {
  display: flex;
  height: 94px;
  padding: 0 50px 0 34px;
  background: #050b1e;
  color: #cdced2;
}
.logo {
  display: flex;
  align-items: center;
  gap: 6px;
  width: 352px;
  height: 76px;
  color: #fff;
  font-family: "Noto Sans CJK SC", sans-serif;
  font-size: 44px;
  font-weight: 700;
}
.nav { display: flex; flex: 1; }
.nav a {
  display: flex;
  align-items: center;
  padding: 0 40px 18px;
}
.nav a:nth-child(1) { padding-left: 52px; }
.nav .active { background: #4370f7; color: #fff; }
.caret {
  border: 10px solid transparent;
  border-top: 13px solid #cdced2;
  border-bottom: 0;
  margin-left: 18px;
}
.caret.big { border-width: 15px 12px 0; margin-left: 10px; }
.caret.dark { border-width: 10px 9px 0; border-top-color: #1f2329; margin: 0 17px 0 0; }
.tools { display: flex; align-items: center; height: 76px; }
.tools button { display: flex; align-items: center; }
.tools svg { fill: none; stroke: #cdced2; stroke-width: 3; }
.tools .robot svg, .tools .ai svg, .tools .user svg { stroke: none; }
.robot { margin-left: 52px; }
.ai { margin-left: 42px; }
.t1 { margin-left: 28px; }
.t2 { margin-left: 36px; }
.user { margin-left: 38px; }
.user svg { margin-right: 10px; }
.tools .user .caret { margin-left: 12px; }

.body { display: flex; flex: 1; }

/* sidebar */
.side {
  position: relative;
  flex: none;
  width: 546px;
  border-right: 2px solid #d6d8db;
}
.side-head {
  display: flex;
  align-items: center;
  gap: 42px;
  height: 114px;
  padding: 0 32px 0 18px;
}
.side-head h2 { flex: 1; font-size: 32px; font-weight: 500; }
.search-row { display: flex; gap: 16px; padding: 0 32px 0 20px; }
.search, .sort {
  display: flex;
  align-items: center;
  height: 63px;
  border: 2px solid #bbbfc4;
  border-radius: 8px;
}
.search { flex: 1; min-width: 0; gap: 18px; padding: 0 12px; }
.search input {
  flex: 1;
  min-width: 0;
  border: 0;
  outline: 0;
  background: none;
  font: inherit;
  color: inherit;
  padding: 0;
}
.search-row .sort { flex: none; width: 64px; justify-content: center; border: 2px solid #bbbfc4; }
.tree { list-style: none; padding: 21px 16px 0 2px; }
.tree button {
  display: flex;
  align-items: center;
  gap: 18px;
  width: 100%;
  height: 80px;
  padding-left: 88px;
  border-radius: 8px;
  white-space: nowrap;
}
.tree .folder { gap: 0; padding-left: 18px; }
.tree .folder span { margin-left: 18px; }
.tree .selected { background: #ebeffd; color: #4370f7; }

/* annotations laid over the page */
.frame {
  position: absolute;
  inset: 11px 8px 2px 16px;
  border: 6px solid rgba(233, 56, 44, .88);
  pointer-events: none;
}
.main .frame { inset: 11px 11px 9px 12px; }
.note {
  position: absolute;
  top: 698px;
  left: 158px;
  color: #ea3a30;
  font-size: 36px;
  font-weight: 500;
}
.main .note { top: 573px; left: 720px; }

/* dashboard header */
.main {
  position: relative;
  display: flex;
  flex: 1;
  flex-direction: column;
  min-width: 0;
  background: #f4f6f8;
}
.bar {
  display: flex;
  align-items: center;
  height: 113px;
  padding: 0 54px 0 48px;
  border-bottom: 2px solid #dcdee1;
  background: #fff;
}
.bar h1 { font-size: 32px; font-weight: 500; }
.tag {
  margin: 0 24px 0 16px;
  padding: 0 8px;
  background: #dff2da;
  color: #56a83a;
  font-size: 24px;
}
.divider { width: 2px; height: 32px; margin: 0 32px 0 24px; background: #bbbfc4; }
.creator { color: #646a73; }
.info { margin-left: 8px; }
.actions { display: flex; align-items: center; gap: 24px; margin-left: auto; }
.actions button {
  display: flex;
  align-items: center;
  justify-content: center;
  gap: 12px;
  width: 160px;
  height: 64px;
  border: 2px solid #bbbfc4;
  border-radius: 8px;
}
.actions svg { fill: none; stroke: #1f2329; stroke-width: 2.5; }
.actions .primary { border-color: #4370f7; background: #4370f7; color: #fff; }
.actions .primary svg { stroke: #fff; }
.actions .more { width: 6px; border: 0; margin-left: 18px; }
.more svg { fill: #1f2329; }

/* dashboard canvas */
.canvas {
  display: grid;
  flex: 1;
  grid-template-columns: 1fr 1fr;
  grid-template-rows: auto 1fr;
  gap: 20px;
  padding: 10px 0 0 10px;
}
.banner {
  position: relative;
  grid-column: 1 / 3;
  height: 130px;
  background: linear-gradient(100deg, #455df7 0%, #4578f8 30%, #4a8df8 55%, #50a7f9 78%, #54b6fb 100%);
}
.banner svg { position: absolute; width: 100%; height: 100%; }
.banner h2 {
  position: relative;
  color: #fff;
  font-size: 61px;
  font-weight: 700;
  line-height: 130px;
  text-align: center;
}
.col { display: flex; flex-direction: column; gap: 20px; min-width: 0; }
.card { background: #fff; min-width: 0; color: #000; }
.card h3 { font-size: 20px; line-height: 28px; font-weight: 700; padding: 16px 16px 0; }
.kpis { display: grid; grid-template-columns: repeat(3, 1fr); gap: 20px; height: 244px; }
.kpi {
  display: flex;
  flex-direction: column;
  align-items: center;
  justify-content: center;
  padding-top: 8px;
}
.kpi strong { color: #3b80e8; font-size: 37px; font-weight: 500; line-height: 52px; }
.kpi span { font-size: 26px; font-weight: 500; line-height: 48px; }
.map { flex: 1; }
.map svg { width: 100%; }
.map path {
  fill: none;
  stroke: #2f3033;
  stroke-width: 2;
  stroke-linejoin: round;
  stroke-linecap: round;
  vector-effect: non-scaling-stroke;
}
.map .thick { stroke-width: 4; filter: url(#rugged); }
.map .speck { stroke-width: 3; }
.map .f-blue { fill: #458ffa; }
.map .f-deep { fill: #3f87d3; }
.map .f-violet { fill: #7e8fdb; }
.map .f-green { fill: #a5ed9b; }
.map .f-teal { fill: #5dcbd0; }
.map .f-yellow { fill: #fbd647; }

.gauges { display: grid; grid-template-columns: repeat(4, 1fr); gap: 20px; height: 394px; }
.card.gauge h3 { font-size: 26px; font-weight: 500; line-height: 38px; white-space: nowrap; }
.gauge svg { width: 168px; margin: 86px auto 0; }
.gauge text { fill: #33373d; font-size: 22px; text-anchor: middle; }
.totals, .good {
  display: flex;
  flex-direction: column;
  align-items: center;
  justify-content: center;
  font-size: 30px;
  line-height: 44px;
  white-space: nowrap;
}
.totals b, .good b { font-weight: 500; }
.totals .second { margin-top: 34px; }
.num { color: #4677dc; }
.totals .num { padding-right: 6px; }
.num.heavy { font-family: "Liberation Sans", sans-serif; font-weight: 700; }
.good { align-items: flex-start; padding-left: 27px; line-height: 38px; }
.good .num { padding-left: 4px; }
.good small { font-family: "Liberation Sans", "Noto Sans CJK SC", sans-serif; font-size: 18px; font-weight: 700; }

.charts { display: grid; grid-template-columns: repeat(2, 1fr); gap: 20px; height: 356px; }
.chart svg { width: 100%; }
.chart text { fill: #1a1a1a; font-size: 16px; }
.chart .end { text-anchor: end; }
.chart .mid { text-anchor: middle; }
.axis { fill: none; stroke: #c9c9c9; stroke-width: 2; }
.wide { flex: 1; }
```
